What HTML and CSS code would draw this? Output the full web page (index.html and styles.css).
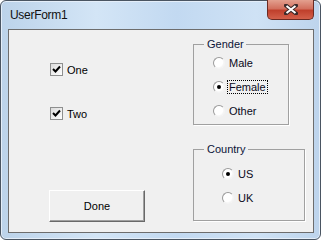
FILE: index.html
```html
<!DOCTYPE html>
<html lang="en">
<head>
    <meta charset="UTF-8">
    <title>UserForm1</title>
    <link rel="stylesheet" href="styles.css">
</head>
<body>
    <div class="window">
        <div class="titlebar">
            <span class="title">UserForm1</span>
            <div class="close">
                <svg width="14" height="11" viewBox="0 0 14 11">
                    <path d="M2 1.5 L12 9.5 M12 1.5 L2 9.5" stroke="#3b2a2a" stroke-width="4" stroke-linecap="square"/>
                    <path d="M2.5 2 L11.5 9 M11.5 2 L2.5 9" stroke="#fff" stroke-width="2"/>
                </svg>
            </div>
        </div>
        <div class="client">
            <div class="left">
                <label class="check">
                    <span class="box">
                        <svg width="11" height="11" viewBox="0 0 11 11">
                            <path d="M2 5 L4.5 7.5 L9 2.5" fill="none" stroke="#000" stroke-width="2"/>
                        </svg>
                    </span>
                    One
                </label>
                <label class="check second">
                    <span class="box">
                        <svg width="11" height="11" viewBox="0 0 11 11">
                            <path d="M2 5 L4.5 7.5 L9 2.5" fill="none" stroke="#000" stroke-width="2"/>
                        </svg>
                    </span>
                    Two
                </label>
                <button class="btn">Done</button>
            </div>
            <div class="right">
                <div class="frame gender">
                    <span class="caption">Gender</span>
                    <label class="radio"><span class="dot"></span><span class="txt">Male</span></label>
                    <label class="radio"><span class="dot on"></span><span class="txt focus">Female</span></label>
                    <label class="radio"><span class="dot"></span><span class="txt">Other</span></label>
                </div>
                <div class="frame country">
                    <span class="caption">Country</span>
                    <label class="radio"><span class="dot on"></span><span class="txt">US</span></label>
                    <label class="radio"><span class="dot"></span><span class="txt">UK</span></label>
                </div>
            </div>
        </div>
    </div>
</body>
</html>
```

FILE: styles.css
```css
body {
    margin: 0;
    padding: 0;
    background-color: #fff;
    font-family: 'Liberation Sans', Arial, sans-serif;
    font-size: 11px;
    color: #000;
}

.window {
    width: 321px;
    height: 240px;
    box-sizing: border-box;
    border: 1px solid #4a5562;
    border-radius: 6px;
    padding: 0 6px 6px 7px;
    display: flex;
    flex-direction: column;
    background: linear-gradient(90deg, #bcd3ea 0%, #d3e5f6 30%, #c2d9f1 55%, #cfe2f5 80%, #bdd4ec 100%);
    box-shadow: inset 0 0 0 1px #e4eef9;
}

.titlebar {
    height: 28px;
    display: flex;
    align-items: center;
}

.title {
    flex: 1;
    padding-left: 2px;
    font-size: 12px;
    letter-spacing: -0.3px;
    color: #111;
}

.close {
    align-self: flex-start;
    margin-top: -1px;
    width: 47px;
    height: 20px;
    box-sizing: border-box;
    border: 1px solid #6b2a22;
    border-top: none;
    border-radius: 0 0 5px 5px;
    background: linear-gradient(#e3a08f 0%, #d2705e 45%, #c0402c 55%, #d3604a 100%);
    display: flex;
    align-items: center;
    justify-content: center;
}

.client {
    flex: 1;
    border: 1px solid #6d6d6d;
    background-color: #f0f0f0;
    display: flex;
    padding-left: 40px;
}

.left {
    width: 96px;
    display: flex;
    flex-direction: column;
    padding-top: 33px;
    padding-bottom: 10px;
}

.check {
    display: flex;
    align-items: center;
    height: 13px;
    margin-left: 1px;
    gap: 4px;
}

.check.second {
    margin-top: 31px;
}

.box {
    width: 13px;
    height: 13px;
    box-sizing: border-box;
    border: 1px solid #8e8f8f;
    background: linear-gradient(135deg, #dcdcdc, #fff);
    display: flex;
    align-items: center;
    justify-content: center;
}

.btn {
    margin-top: auto;
    width: 96px;
    height: 32px;
    box-sizing: border-box;
    background-color: #f0f0f0;
    border: 1px solid;
    border-color: #fff #696969 #696969 #fff;
    box-shadow: inset -1px -1px 0 #a0a0a0;
    font-family: inherit;
    font-size: 11px;
    color: #000;
    padding: 0;
}

.right {
    margin-left: 48px;
    padding-top: 14px;
    display: flex;
    flex-direction: column;
    align-items: flex-start;
}

.frame {
    position: relative;
    border: 1px solid #a0a0a0;
    box-shadow: 1px 1px 0 #fff;
    display: flex;
    flex-direction: column;
    gap: 10px;
}

.gender {
    padding: 11px 0 6px 19px;
    width: 75px;
}

.country {
    margin-top: 24px;
    padding: 17px 0 15px 28px;
    width: 82px;
}

.caption {
    position: absolute;
    left: 10px;
    top: -7px;
    line-height: 13px;
    padding: 0 2px 0 3px;
    background-color: #f0f0f0;
    color: #0c1438;
}

.radio {
    display: flex;
    align-items: center;
    height: 14px;
    gap: 2px;
}

.dot {
    width: 12px;
    height: 12px;
    box-sizing: border-box;
    border-radius: 50%;
    border: 1px solid;
    border-color: #9a9a9a #f4f4f4 #f4f4f4 #9a9a9a;
    background: radial-gradient(circle at 40% 40%, #fff 55%, #e2e2e2 100%);
    display: flex;
    align-items: center;
    justify-content: center;
}

.dot.on::after {
    content: "";
    width: 4px;
    height: 4px;
    border-radius: 50%;
    background-color: #000;
}

.txt {
    padding: 0 1px;
    line-height: 12px;
    border: 1px dotted transparent;
    color: #0a0a20;
}

.txt.focus {
    border-color: #000;
}
```
